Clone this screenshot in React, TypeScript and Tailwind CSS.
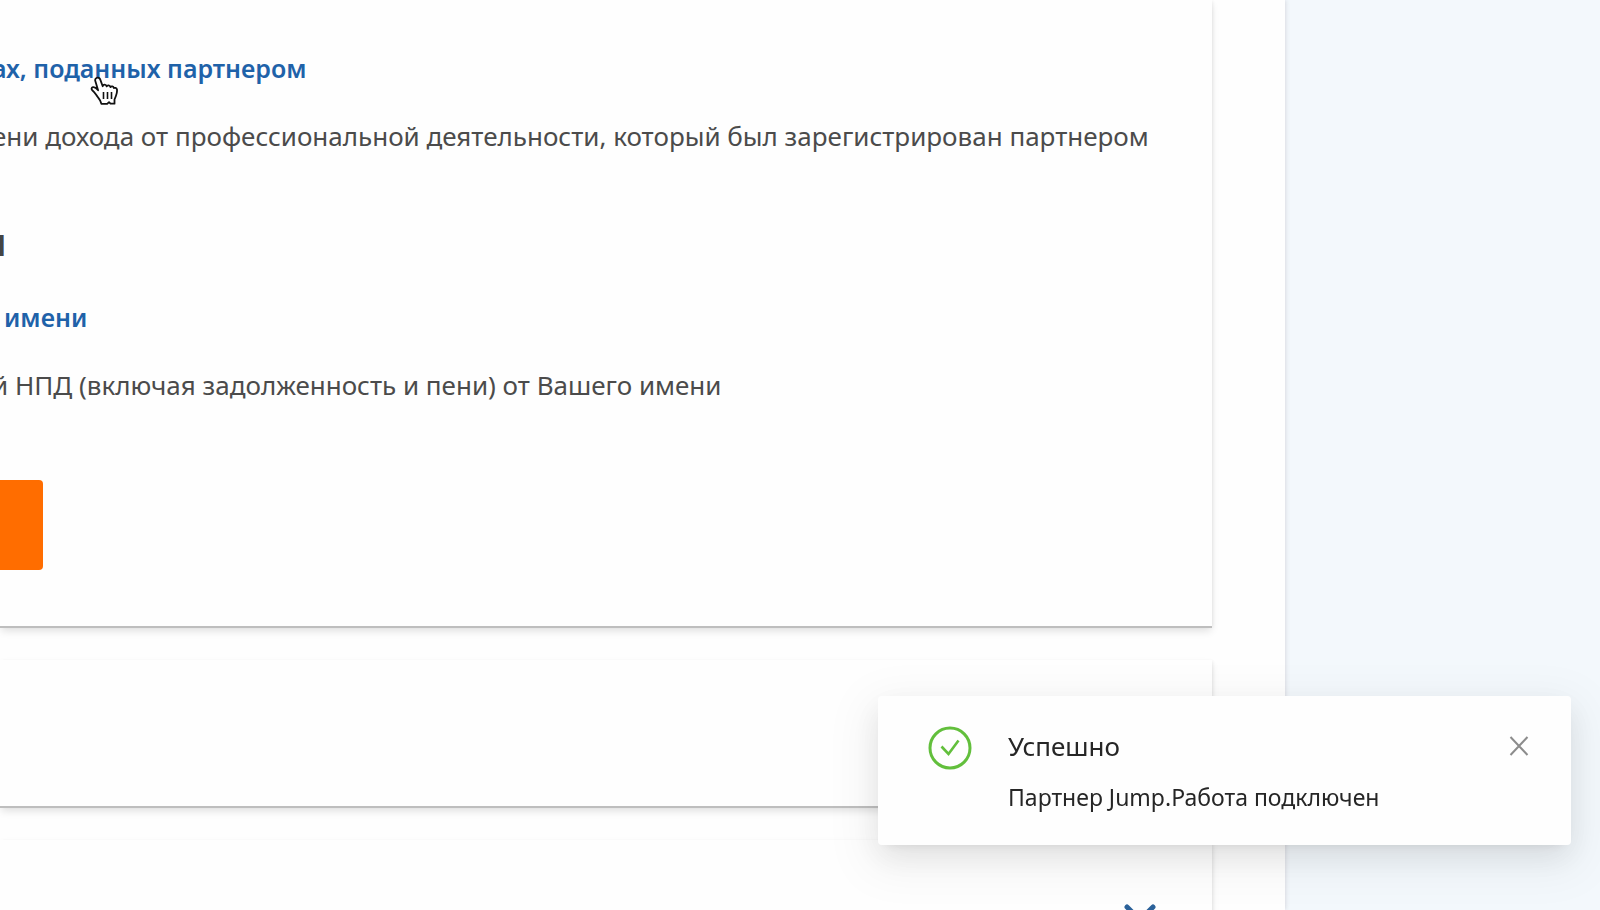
import { useState } from 'react'

function HandCursor() {
  return (
    <svg
      aria-hidden="true"
      viewBox="0 0 28 30"
      className="pointer-events-none absolute top-full left-[98px] -mt-3 h-[30px] w-7"
    >
      <path
        d="M6.500 2c1.600-.9 3.200-.1 3.700 1.400l2.500 6.800c.6-2.100 3.400-2 4 .2.700-1.500 3.200-1.300 3.700.700.900-1.200 3.100-.9 3.500 1 .8-.6 2.600-.2 3 1.200.5 2.200-.2 4.600-1 6.700l-1.400 3.500v4.200h-4l-1.500-1.500-1.800 1.700h-5.800c-.4-2.900-2-4.800-3.700-6.900-1.800-2.200-2.900-4.700-5.200-6.500-1.400-1.100-1.200-2.900.4-3.300 2.200-.4 3.800 1.300 5.200 3L5.300 5C4.900 3.800 5.300 2.700 6.500 2z"
        fill="#fff"
        stroke="#111"
        strokeWidth="1.8"
        strokeLinejoin="round"
      />
      <path d="M13.500 16v7M17.500 16v7M21.500 16v7" stroke="#111" strokeWidth="1.6" fill="none" />
    </svg>
  )
}

function SuccessIcon() {
  return (
    <svg aria-hidden="true" viewBox="0 0 44 44" fill="none" className="h-11 w-11 shrink-0">
      <circle cx="22" cy="22" r="20" stroke="#62bf3c" strokeWidth="3" />
      <path d="M13.500 20.500l7 7.500L30.500 14.500" stroke="#62bf3c" strokeWidth="2.600" />
    </svg>
  )
}

const PERMISSIONS = [
  {
    title: 'ах, поданных партнером',
    text: 'ени дохода от профессиональной деятельности, который был зарегистрирован партнером',
    hovered: true,
  },
  {
    title: 'имени',
    text: 'й НПД (включая задолженность и пени) от Вашего имени',
    hovered: false,
  },
]

function Permission({ item }: { item: (typeof PERMISSIONS)[number] }) {
  return (
    <div className="-ml-2">
      <a
        href="#"
        className={`relative inline-block text-[25px] font-semibold text-[#1f62a9] ${item.hovered ? '' : 'pl-3'}`}
      >
        {item.title}
        {item.hovered && <HandCursor />}
      </a>
      <p className="mt-7 whitespace-nowrap text-[#4b4b4b]">{item.text}</p>
    </div>
  )
}

const CARD = 'border-b-2 border-[#bebebe] bg-[#fefefe] shadow-[0_4px_8px_-1px_rgba(0,0,0,0.12),2px_0_3px_-1px_rgba(0,0,0,0.06)]'

export default function App() {
  const [open, setOpen] = useState(true)

  return (
    <div className="h-screen overflow-hidden bg-[#f3f8fc] pr-[315px] font-['Noto_Sans',sans-serif] text-[26px] leading-10">
      <main className="flex h-full flex-col gap-8 bg-[#fefefe] pr-[73px] shadow-[0_0_5px_rgba(60,40,60,0.2)]">
        <section className={`pt-12 pb-14 ${CARD}`}>
          <Permission item={PERMISSIONS[0]} />
          <h2 className="mt-[65px] mb-9 -ml-[19px] text-[38px] font-bold text-[#444]">и</h2>
          <Permission item={PERMISSIONS[1]} />
          <button aria-label="Разрешить" className="mt-[75px] block h-[90px] w-[43px] rounded-r bg-[#ff6d00]" />
        </section>

        <section className={`h-[148px] shrink-0 ${CARD}`} />

        <section className={`flex h-[150px] shrink-0 items-center justify-end pr-14 ${CARD}`}>
          <button aria-label="Развернуть">
            <svg viewBox="0 0 32 20" className="h-5 w-8" fill="none">
              <path d="M3 3l13 13L29 3" stroke="#2b6199" strokeWidth="5" strokeLinecap="round" />
            </svg>
          </button>
        </section>
      </main>

      {open && (
        <div
          role="status"
          className="fixed right-[29px] bottom-[65px] flex w-[693px] items-start rounded bg-[#fefefe] pt-[30px] pr-8 pb-7 pl-[50px] text-[#262626] shadow-[0_6px_12px_-8px_rgba(0,0,0,0.12),0_12px_32px_rgba(0,0,0,0.08),0_14px_48px_12px_rgba(0,0,0,0.05)]"
        >
          <SuccessIcon />
          <div className="ml-9 flex-1">
            <p>Успешно</p>
            <p className="mt-[11px] text-[23px]">Партнер Jump.Работа подключен</p>
          </div>
          <button aria-label="Закрыть" onClick={() => setOpen(false)} className="p-2">
            <svg viewBox="0 0 24 24" className="h-6 w-6" fill="none">
              <path d="M3.500 3l17 18M20.500 3l-17 18" stroke="#8c8c8c" strokeWidth="2" />
            </svg>
          </button>
        </div>
      )}
    </div>
  )
}
